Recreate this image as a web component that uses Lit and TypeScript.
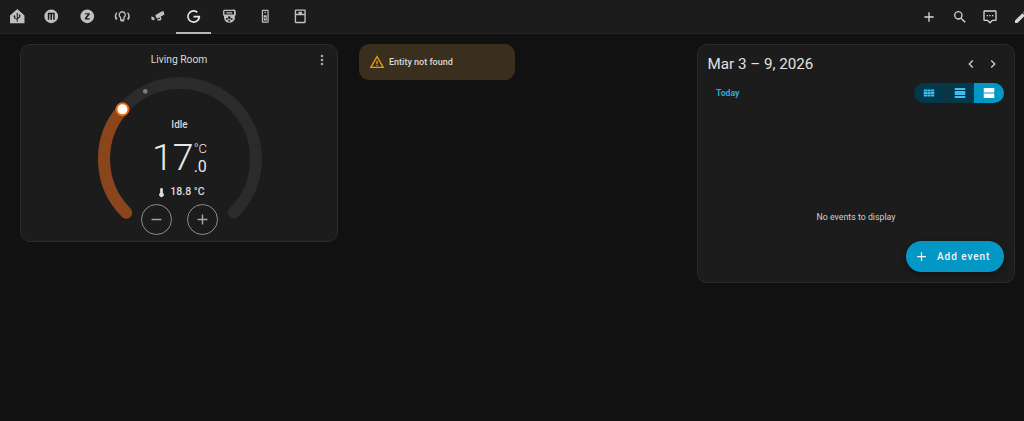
import { LitElement, html, css, svg } from "lit";
import { customElement } from "lit/decorators.js";

const P = {
  home: "M12 1.500 1.500 11V22h21V11L12 1.500Zm0 5.500 1.700 2.200h-1V14l2-1.500v-1.300h-.9l1.700-2 1.700 2h-.9v2.100l-3.600 2.700V20h-1.400v-2.800L7.200 14.500v-2.300h-.9l1.700-2 1.700 2h-.9v1.500l2.500 1.800V9.200h-1L12 7Z",
  m: "M12 2a10 10 0 1 0 0 20 10 10 0 0 0 0-20Zm-5 5h10v10h-2.200V9h-1.700v8h-2.200V9H9.200v8H7V7Z",
  z: "M12 2a10 10 0 1 0 0 20 10 10 0 0 0 0-20Zm-3.500 5.500h7v1.800L11.300 15h4.200v1.600h-7v-1.800L12.700 9H8.500V7.500Z",
  bulbs: "M12 4.500a5.500 5.500 0 0 0-3.300 9.900V18h1v1.500h4.600V18h1v-3.600A5.500 5.500 0 0 0 12 4.500Zm0 2a3.500 3.500 0 0 1 2 6.400l-.4.300V16.500h-3.200v-3.300l-.4-.3a3.500 3.500 0 0 1 2-6.400ZM3.500 6 5 7.400a6.500 6.500 0 0 0 0 8.200L3.500 17.500l-1-.5A10 10 0 0 1 1 11.500 9 9 0 0 1 3.500 6Zm17 0A9 9 0 0 1 23 11.500a10 10 0 0 1-1.500 5.500l-1 .5L19 15.600a6.500 6.500 0 0 0 0-8.200L20.500 6Z",
  cctv: "M18.150 4.410 8.660 9.680c-.77.43-1.040 1.400-.61 2.170l1.500 2.600c.43.760 1.400 1.040 2.170.6l2-1.100.45.790c.38.660.36 1.300.36 1.300H11v2h3.500c1.100 0 2-.9 2-2v-1.500l-1.100-1.900 5.600-3.100-1.500-5.120-1.350.490ZM2 12l3 1.500 2 1.500-1.500 3L2 16.500V12Z",
  g: "M21.300 11.100H12v2.300h6.700c-.8 3-3.300 5.300-6.700 5.300a6.700 6.700 0 1 1 4.500-11.700L18.100 5.300A9 9 0 1 0 12 21c5.300 0 9.400-3.800 9.400-9 0-.3 0-.6-.1-.9Z",
  printer: "M5 2.500h12.500L19 1.500l.8 1.500c1 .3 1.700 1.200 1.700 2.300V9.500c0 1-.6 1.800-1.500 2.200A7.800 7.800 0 0 1 12 21.500a7.800 7.800 0 0 1-7.500-9.800A2.400 2.400 0 0 1 3 9.500V4.800c0-1.300 1-2.300 2-2.300Zm0 2v5h14v-5H5Zm2.800 1.500h8.400v2H7.800V6ZM12 12a2 2 0 1 0 0 4 2 2 0 0 0 0-4Zm-3.500 2.500a1.500 1.500 0 1 0 0 3 1.500 1.500 0 0 0 0-3Zm7 0a1.500 1.500 0 1 0 0 3 1.500 1.500 0 0 0 0-3ZM12 17a1.500 1.500 0 1 0 0 3 1.500 1.500 0 0 0 0-3Z",
  fridge: "M8.500 2.500h7A1.500 1.500 0 0 1 17 4v16a1.500 1.500 0 0 1-1.500 1.500h-7A1.500 1.500 0 0 1 7 20V4a1.500 1.500 0 0 1 1.500-1.500ZM8.800 4.300v15.400h6.400V4.300H8.800Zm2.200 1.200h2v2.200h-2V5.500ZM9.800 10.500h4.400v7.500H9.800v-7.500Zm1.400 2.500v2.500h1.600V13h-1.600Z",
  oven: "M5.500 2h13A1.500 1.500 0 0 1 20 3.500v17a1.500 1.500 0 0 1-1.500 1.500h-13A1.500 1.500 0 0 1 4 20.500v-17A1.500 1.500 0 0 1 5.500 2ZM6 4v4.500h3.500V5.500h5v3H18V4H6Zm0 6.500V20h12v-9.500H6Z",
  plus: "M19 13h-6v6h-2v-6H5v-2h6V5h2v6h6v2Z",
  search: "M9.500 3a6.500 6.500 0 0 1 4.900 10.800l.3.300h.8l5 5-1.500 1.500-5-5v-.8l-.3-.3A6.500 6.500 0 1 1 9.500 3Zm0 2a4.500 4.500 0 1 0 0 9 4.500 4.500 0 0 0 0-9Z",
  chat: "M4 2h16a2 2 0 0 1 2 2v12a2 2 0 0 1-2 2h-4l-4 4-4-4H4a2 2 0 0 1-2-2V4a2 2 0 0 1 2-2Zm0 2v12h4.800l3.200 3.200 3.200-3.200H20V4H4Zm3 5h2v2H7V9Zm4 0h2v2h-2V9Zm4 0h2v2h-2V9Z",
  pencil: "M20.700 7c.4-.4.4-1 0-1.400l-2.300-2.300c-.4-.4-1-.4-1.400 0l-1.800 1.800 3.700 3.700L20.700 7ZM3 17.300V21h3.700L17.800 9.900l-3.700-3.700L3 17.300Z",
  dots: "M12 16a2 2 0 1 1 0 4 2 2 0 0 1 0-4Zm0-6a2 2 0 1 1 0 4 2 2 0 0 1 0-4Zm0-6a2 2 0 1 1 0 4 2 2 0 0 1 0-4Z",
  warn: "M12 2 1 21h22L12 2Zm0 4 7.500 13h-15L12 6Zm-1 4v5h2v-5h-2Zm0 6v2h2v-2h-2Z",
  thermo: "M15 13V5a3 3 0 0 0-6 0v8a5 5 0 1 0 6 0Z",
  minus: "M19 13H5v-2h14v2Z",
  left: "M15.400 16.600 10.800 12l4.600-4.600L14 6l-6 6 6 6 1.400-1.400Z",
  right: "M8.600 16.600 13.200 12 8.600 7.400 10 6l6 6-6 6-1.400-1.400Z",
  month: "M3 6h5.600v3.600H3V6Zm6.200 0h5.600v3.600H9.200V6Zm6.200 0H21v3.600h-5.600V6ZM3 10.200h5.600v3.600H3v-3.600Zm6.200 0h5.600v3.600H9.200v-3.600Zm6.200 0H21v3.600h-5.600v-3.600ZM3 14.400h5.600V18H3v-3.600Zm6.200 0h5.600V18H9.200v-3.600Zm6.200 0H21V18h-5.600v-3.600Z",
  week: "M3 3.500h18v3.500H3V3.500Zm0 5h18v7H3v-7ZM3 17h18v3.500H3V17Z",
  day: "M3 3.500h18v7.500H3V3.500Zm0 9.500h18v7.500H3V13Z",
};

const icon = (d: string, size = 24) => html`<svg width=${size} height=${size} viewBox="0 0 24 24" fill="currentColor" fill-rule="evenodd" aria-hidden="true">${svg`<path d=${d}></path>`}</svg>`;

const polar = (deg: number, r = 76) => {
  const a = (deg * Math.PI) / 180;
  return [82 + r * Math.cos(a), 82 + r * Math.sin(a)];
};
const arc = (from: number, to: number) => {
  const [x1, y1] = polar(from);
  const [x2, y2] = polar(to);
  return `M${x1} ${y1}A76 76 0 ${to - from > 180 ? 1 : 0} 1 ${x2} ${y2}`;
};

@customElement("app-root")
export class AppRoot extends LitElement {
  static styles = css`
    :host { display: block; height: 421px; overflow: hidden; background: #111111; color: #e1e1e1; font-family: Roboto, "Liberation Sans", sans-serif; }
    .bar { height: 34px; box-sizing: border-box; background: #1c1c1c; border-bottom: 1px solid #242424; display: flex; align-items: center; justify-content: space-between; color: #c0c0c0; }
    .tabs { display: flex; }
    .tab { width: 35.600px; height: 33px; box-sizing: border-box; display: flex; align-items: center; justify-content: center; position: relative; }
    .tab svg { width: 16.500px; height: 16.500px; }
    .tab:first-child { width: 33.500px; }
    .tab.on { color: #e6e6e6; }
    .tab.on svg { width: 17px; height: 17px; }
    .tab.on::after { content: ""; position: absolute; left: 0; right: 0; bottom: -1px; height: 2px; background: #b8b8b8; }
    .tools { display: flex; align-items: center; margin-right: -12px; }
    .tool { width: 30.500px; display: flex; justify-content: center; color: #d6d6d6; }
    .tool svg { width: 16px; height: 16px; }
    .grid { display: flex; padding: 10px 9px 0 20px; align-items: flex-start; }
    .col { width: 339px; flex: none; }
    .col.last { width: 318px; margin-left: -1px; }
    .card { background: #1c1c1c; border: 1px solid #2b2b2b; border-radius: 10px; box-sizing: border-box; }
    .climate { width: 318px; height: 198px; display: flex; flex-direction: column; align-items: center; position: relative; }
    .title { font-size: 10.300px; line-height: 13px; color: #d8d8d8; margin-top: 8px; }
    .more { position: absolute; top: 7px; right: 7px; color: #a8a8a8; display: flex; }
    .more svg { width: 16px; height: 16px; }
    .dial { width: 164px; height: 164px; position: relative; margin-top: 11px; margin-left: 1px; }
    .dial > svg { display: block; }
    .center { position: absolute; inset: 0; display: flex; flex-direction: column; align-items: center; }
    .idle { font-size: 10px; line-height: 12px; font-weight: 500; color: #d6d6d6; margin-top: 42px; }
    .temp { display: flex; margin-top: 6px; height: 40px; color: #e8e8e8; }
    .big { font-size: 37.500px; line-height: 41px; font-weight: 300; }
    .small { display: flex; flex-direction: column; line-height: 18px; font-weight: 300; padding-top: 3px; }
    .unit { font-size: 13px; }
    .dec { font-size: 16px; font-weight: 400; }
    .cur { display: flex; align-items: center; font-size: 10.500px; font-weight: 500; color: #dcdcdc; margin-top: 8px; line-height: 14px; gap: 3px; margin-left: 2px; }
    .cur svg { width: 11px; height: 11px; }
    .btns { position: absolute; left: 0; right: 0; bottom: 6px; display: flex; justify-content: center; gap: 15px; }
    .btn { width: 31px; height: 31px; box-sizing: border-box; border: 1px solid #8c8c8c; border-radius: 50%; display: flex; align-items: center; justify-content: center; color: #a6a6a6; }
    .btn svg { width: 17px; height: 17px; }
    .warning { width: 156px; height: 36px; box-sizing: border-box; border-radius: 10px; background: #3a2e1c; display: flex; align-items: center; padding-left: 10px; gap: 5px; font-size: 9px; font-weight: 500; color: #d9d9d9; }
    .warning svg { width: 16px; height: 16px; color: #e89a10; flex: none; margin-right: -1px; }
    .cal { width: 318px; height: 239px; padding: 0 10px; position: relative; }
    .cal-head { display: flex; align-items: center; justify-content: space-between; height: 38px; padding-bottom: 1px; box-sizing: border-box; }
    .range { font-size: 15.200px; line-height: 20px; color: #e1e1e1; margin-left: -0.500px; }
    .nav { display: flex; gap: 6px; margin-right: 3px; color: #d0d0d0; }
    .nav svg { width: 16px; height: 16px; }
    .row { display: flex; align-items: center; justify-content: space-between; height: 20px; }
    .today { font-size: 8.700px; font-weight: 700; color: #2aa6d6; margin-left: 8px; }
    .seg { display: flex; height: 20px; border-radius: 10px; overflow: hidden; background: #03374a; }
    .seg div { width: 30px; display: flex; align-items: center; justify-content: center; color: #3fbdf0; border-left: 1px solid #12303c; box-sizing: border-box; }
    .seg div:first-child { border-left: 0; }
    .seg svg { width: 14px; height: 14px; }
    .seg .sel { background: #0397c6; color: #ffffff; border-left: 0; }
    .empty { text-align: center; font-size: 8.800px; color: #d0d0d0; margin-top: 108px; line-height: 12px; }
    .fab { position: absolute; right: 10px; bottom: 10px; height: 31px; width: 98px; box-sizing: border-box; border-radius: 16px; background: #0397c6; color: #f4f4f4; display: flex; align-items: center; padding-left: 8px; gap: 8px; font-size: 10px; font-weight: 500; letter-spacing: 0.950px; box-shadow: 0 2px 6px rgba(0,0,0,0.45); }
    .fab svg { width: 15px; height: 15px; }
  `;

  render() {
    const tabs = [P.home, P.m, P.z, P.bulbs, P.cctv, P.g, P.printer, P.fridge, P.oven];
    const [tx, ty] = polar(220.8);
    const [dx, dy] = polar(242.8);
    return html`
      <div class="bar">
        <div class="tabs">
          ${tabs.map((d) => html`<div class="tab ${d === P.g ? "on" : ""}">${icon(d)}</div>`)}
        </div>
        <div class="tools">
          <div class="tool">${icon(P.plus)}</div>
          <div class="tool">${icon(P.search)}</div>
          <div class="tool">${icon(P.chat)}</div>
          <div class="tool">${icon(P.pencil)}</div>
        </div>
      </div>
      <div class="grid">
        <div class="col">
          <div class="card climate">
            <div class="title">Living Room</div>
            <div class="more">${icon(P.dots)}</div>
            <div class="dial">
              <svg width="164" height="164" viewBox="0 0 164 164" fill="none">
                <path d=${arc(135, 405)} stroke="#2b2b2b" stroke-width="12" stroke-linecap="round"></path>
                <path d=${arc(135, 220.8)} stroke="#8b451c" stroke-width="12" stroke-linecap="round"></path>
                <circle cx=${dx} cy=${dy} r="2.300" fill="#7c7c7c"></circle>
                <circle cx=${tx} cy=${ty} r="6" fill="#ffffff" stroke="#f0640f" stroke-width="2"></circle>
              </svg>
              <div class="center">
                <div class="idle">Idle</div>
                <div class="temp">
                  <span class="big">17</span>
                  <span class="small"><span class="unit">°C</span><span class="dec">.0</span></span>
                </div>
                <div class="cur">${icon(P.thermo)}<span>18.8 °C</span></div>
              </div>
            </div>
            <div class="btns">
              <div class="btn">${icon(P.minus)}</div>
              <div class="btn">${icon(P.plus)}</div>
            </div>
          </div>
        </div>
        <div class="col">
          <div class="warning">${icon(P.warn)}<span>Entity not found</span></div>
        </div>
        <div class="col last">
          <div class="card cal">
            <div class="cal-head">
              <div class="range">Mar 3 – 9, 2026</div>
              <div class="nav">${icon(P.left)}${icon(P.right)}</div>
            </div>
            <div class="row">
              <div class="today">Today</div>
              <div class="seg">
                <div>${icon(P.month)}</div>
                <div>${icon(P.week)}</div>
                <div class="sel">${icon(P.day)}</div>
              </div>
            </div>
            <div class="empty">No events to display</div>
            <div class="fab">${icon(P.plus)}<span>Add event</span></div>
          </div>
        </div>
      </div>
    `;
  }
}
